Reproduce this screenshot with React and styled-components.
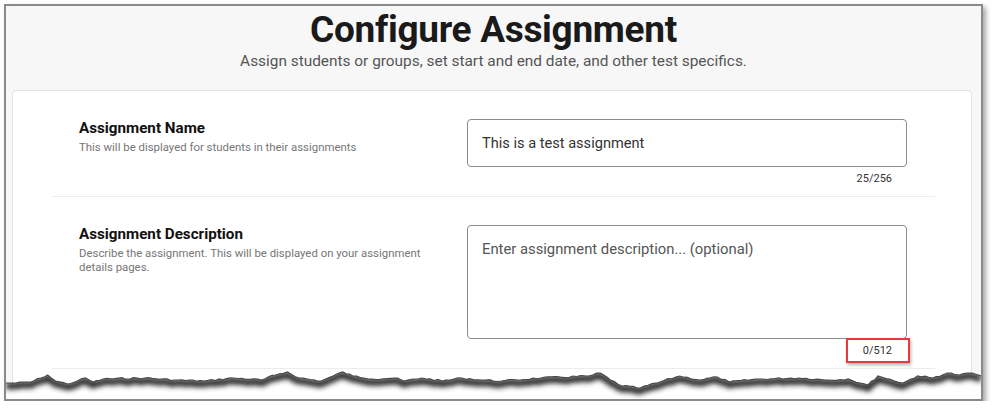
import React from 'react';
import styled, { createGlobalStyle } from 'styled-components';

const GlobalStyle = createGlobalStyle`
  html, body {
    margin: 0;
    padding: 0;
    background: #ffffff;
  }
  body {
    font-family: Roboto, "Liberation Sans", Arial, sans-serif;
  }
  * {
    box-sizing: border-box;
  }
`;

// key points of the torn bottom edge, in page x / local y
const tearKeys = [
  [0, 16], [10, 16], [25, 15], [35, 11], [42, 8], [50, 14], [62, 17], [72, 14], [80, 11],
  [88, 15], [98, 12], [140, 11], [170, 13], [200, 14], [230, 11], [258, 13], [272, 8],
  [284, 5], [296, 11], [318, 14], [330, 9], [340, 5], [350, 9], [370, 12], [392, 11],
  [402, 14], [420, 11], [440, 14], [460, 11], [480, 13], [500, 14], [540, 11], [588, 9],
  [600, 6], [610, 13], [622, 19], [640, 21], [660, 15], [680, 9], [700, 13], [718, 10],
  [730, 15], [760, 12], [800, 11], [830, 13], [850, 12], [862, 16], [870, 18], [880, 9],
  [905, 16], [920, 9], [935, 11], [950, 6], [962, 8], [975, 6], [984, 9]
];

function buildTear() {
  const pts = [];
  let seed = 7;
  const rnd = () => {
    seed = (seed * 9301 + 49297) % 233280;
    return seed / 233280;
  };
  for (let i = 0; i < tearKeys.length - 1; i++) {
    const [x0, y0] = tearKeys[i];
    const [x1, y1] = tearKeys[i + 1];
    const steps = Math.max(1, Math.round((x1 - x0) / 4));
    for (let s = 0; s < steps; s++) {
      const t = s / steps;
      const x = x0 + (x1 - x0) * t;
      const y = y0 + (y1 - y0) * t + (s === 0 ? 0 : (rnd() - 0.5) * 1.8);
      pts.push([x, y]);
    }
  }
  pts.push(tearKeys[tearKeys.length - 1]);
  return pts;
}

const tear = buildTear();
const tearLine = tear.map(([x, y], i) => `${i ? 'L' : 'M'}${x.toFixed(1)} ${y.toFixed(1)}`).join(' ');
const tearFill = `${tearLine} L984 40 L0 40 Z`;

function TornEdge() {
  return (
    <TearSvg viewBox="0 0 984 32" preserveAspectRatio="none">
      <defs>
        <clipPath id="below">
          <path d={tearFill} />
        </clipPath>
        <filter id="soft" x="-5%" y="-100%" width="110%" height="300%">
          <feGaussianBlur stdDeviation="2.6" />
        </filter>
      </defs>
      <path d={tearFill} fill="#ffffff" />
      <g clipPath="url(#below)">
        <path d={tearLine} transform="translate(0 3)" fill="none" stroke="#2a2a2a" strokeWidth="7" filter="url(#soft)" />
      </g>
      <path d={tearLine} fill="none" stroke="#4a4a4a" strokeWidth="1.2" />
    </TearSvg>
  );
}

function Field({ label, hint, value, placeholder, count, max, tall, marked }) {
  return (
    <Row>
      <LabelCol>
        <Label>{label}</Label>
        <Hint>{hint}</Hint>
      </LabelCol>
      <InputCol>
        {tall ? (
          <TextArea placeholder={placeholder} defaultValue={value} readOnly />
        ) : (
          <TextInput placeholder={placeholder} defaultValue={value} readOnly />
        )}
        <Counter>
          <CountText>
            {count}/{max}
            {marked && <Mark />}
          </CountText>
        </Counter>
      </InputCol>
    </Row>
  );
}

export default function App() {
  return (
    <>
      <GlobalStyle />
      <Frame>
        <Header>
          <Title>Configure Assignment</Title>
          <Subtitle>Assign students or groups, set start and end date, and other test specifics.</Subtitle>
        </Header>
        <Card>
          <Field
            label="Assignment Name"
            hint="This will be displayed for students in their assignments"
            value="This is a test assignment"
            count={25}
            max={256}
          />
          <Field
            label="Assignment Description"
            hint="Describe the assignment. This will be displayed on your assignment details pages."
            placeholder="Enter assignment description... (optional)"
            count={0}
            max={512}
            tall
            marked
          />
        </Card>
        <TornEdge />
      </Frame>
    </>
  );
}

const Frame = styled.div`
  position: relative;
  margin: 4px 0 0 4px;
  width: 979px;
  height: 397px;
  border: 2px solid #8a8a8a;
  background: #f7f7f7;
  box-shadow: 3px 3px 5px rgba(0, 0, 0, 0.35);
  overflow: hidden;
`;

const Header = styled.header`
  text-align: center;
  padding-top: 4px;
`;

const Title = styled.h1`
  margin: 0;
  font-size: 37px;
  line-height: 40px;
  font-weight: 700;
  color: #1a1a1a;
  letter-spacing: -0.3px;
`;

const Subtitle = styled.p`
  margin: 1px 0 0;
  font-size: 15.4px;
  line-height: 20px;
  color: #555555;
`;

const Card = styled.section`
  margin: 19px 9px 0 6px;
  background: #ffffff;
  border: 1px solid #e2e2e2;
  border-radius: 4px;
  padding: 0 36px 0 39px;
  height: 400px;
`;

const Row = styled.div`
  display: grid;
  grid-template-columns: 1fr 440px;
  column-gap: 27px;
  padding: 28px 28px 11px 27px;
  border-bottom: 1px solid #ececec;
`;

const LabelCol = styled.div`
  display: flex;
  flex-direction: column;
  gap: 4px;
  padding-right: 4px;
`;

const Label = styled.h3`
  margin: 0;
  font-size: 15.2px;
  line-height: 18px;
  font-weight: 700;
  color: #111111;
`;

const Hint = styled.p`
  margin: 0;
  font-size: 11.4px;
  line-height: 13.5px;
  color: #767676;
`;

const InputCol = styled.div`
  display: flex;
  flex-direction: column;
`;

const TextInput = styled.input`
  width: 440px;
  height: 48px;
  padding: 0 14px;
  border: 1px solid #8c8c8c;
  border-radius: 4px;
  font-family: Roboto, "Liberation Sans", Arial, sans-serif;
  font-size: 14.6px;
  color: #333333;
  outline: none;

  &::placeholder {
    color: #555555;
  }
`;

const TextArea = styled.textarea`
  width: 440px;
  height: 114px;
  padding: 14px 14px;
  border: 1px solid #8c8c8c;
  border-radius: 4px;
  font-family: Roboto, "Liberation Sans", Arial, sans-serif;
  font-size: 14.8px;
  line-height: 18px;
  color: #333333;
  resize: none;
  outline: none;

  &::placeholder {
    color: #555555;
  }
`;

const Counter = styled.div`
  display: flex;
  justify-content: flex-end;
  padding: 5px 15px 0 0;
`;

const CountText = styled.span`
  position: relative;
  font-size: 11px;
  line-height: 13px;
  color: #333333;
`;

const Mark = styled.span`
  position: absolute;
  left: -17px;
  right: -18px;
  top: -6px;
  bottom: -6px;
  border: 2px solid #e8393c;
  box-shadow: 1px 2px 3px rgba(0, 0, 0, 0.3);
`;

const TearSvg = styled.svg`
  position: absolute;
  left: 0;
  bottom: 0;
  width: 100%;
  height: 32px;
  display: block;
`;
